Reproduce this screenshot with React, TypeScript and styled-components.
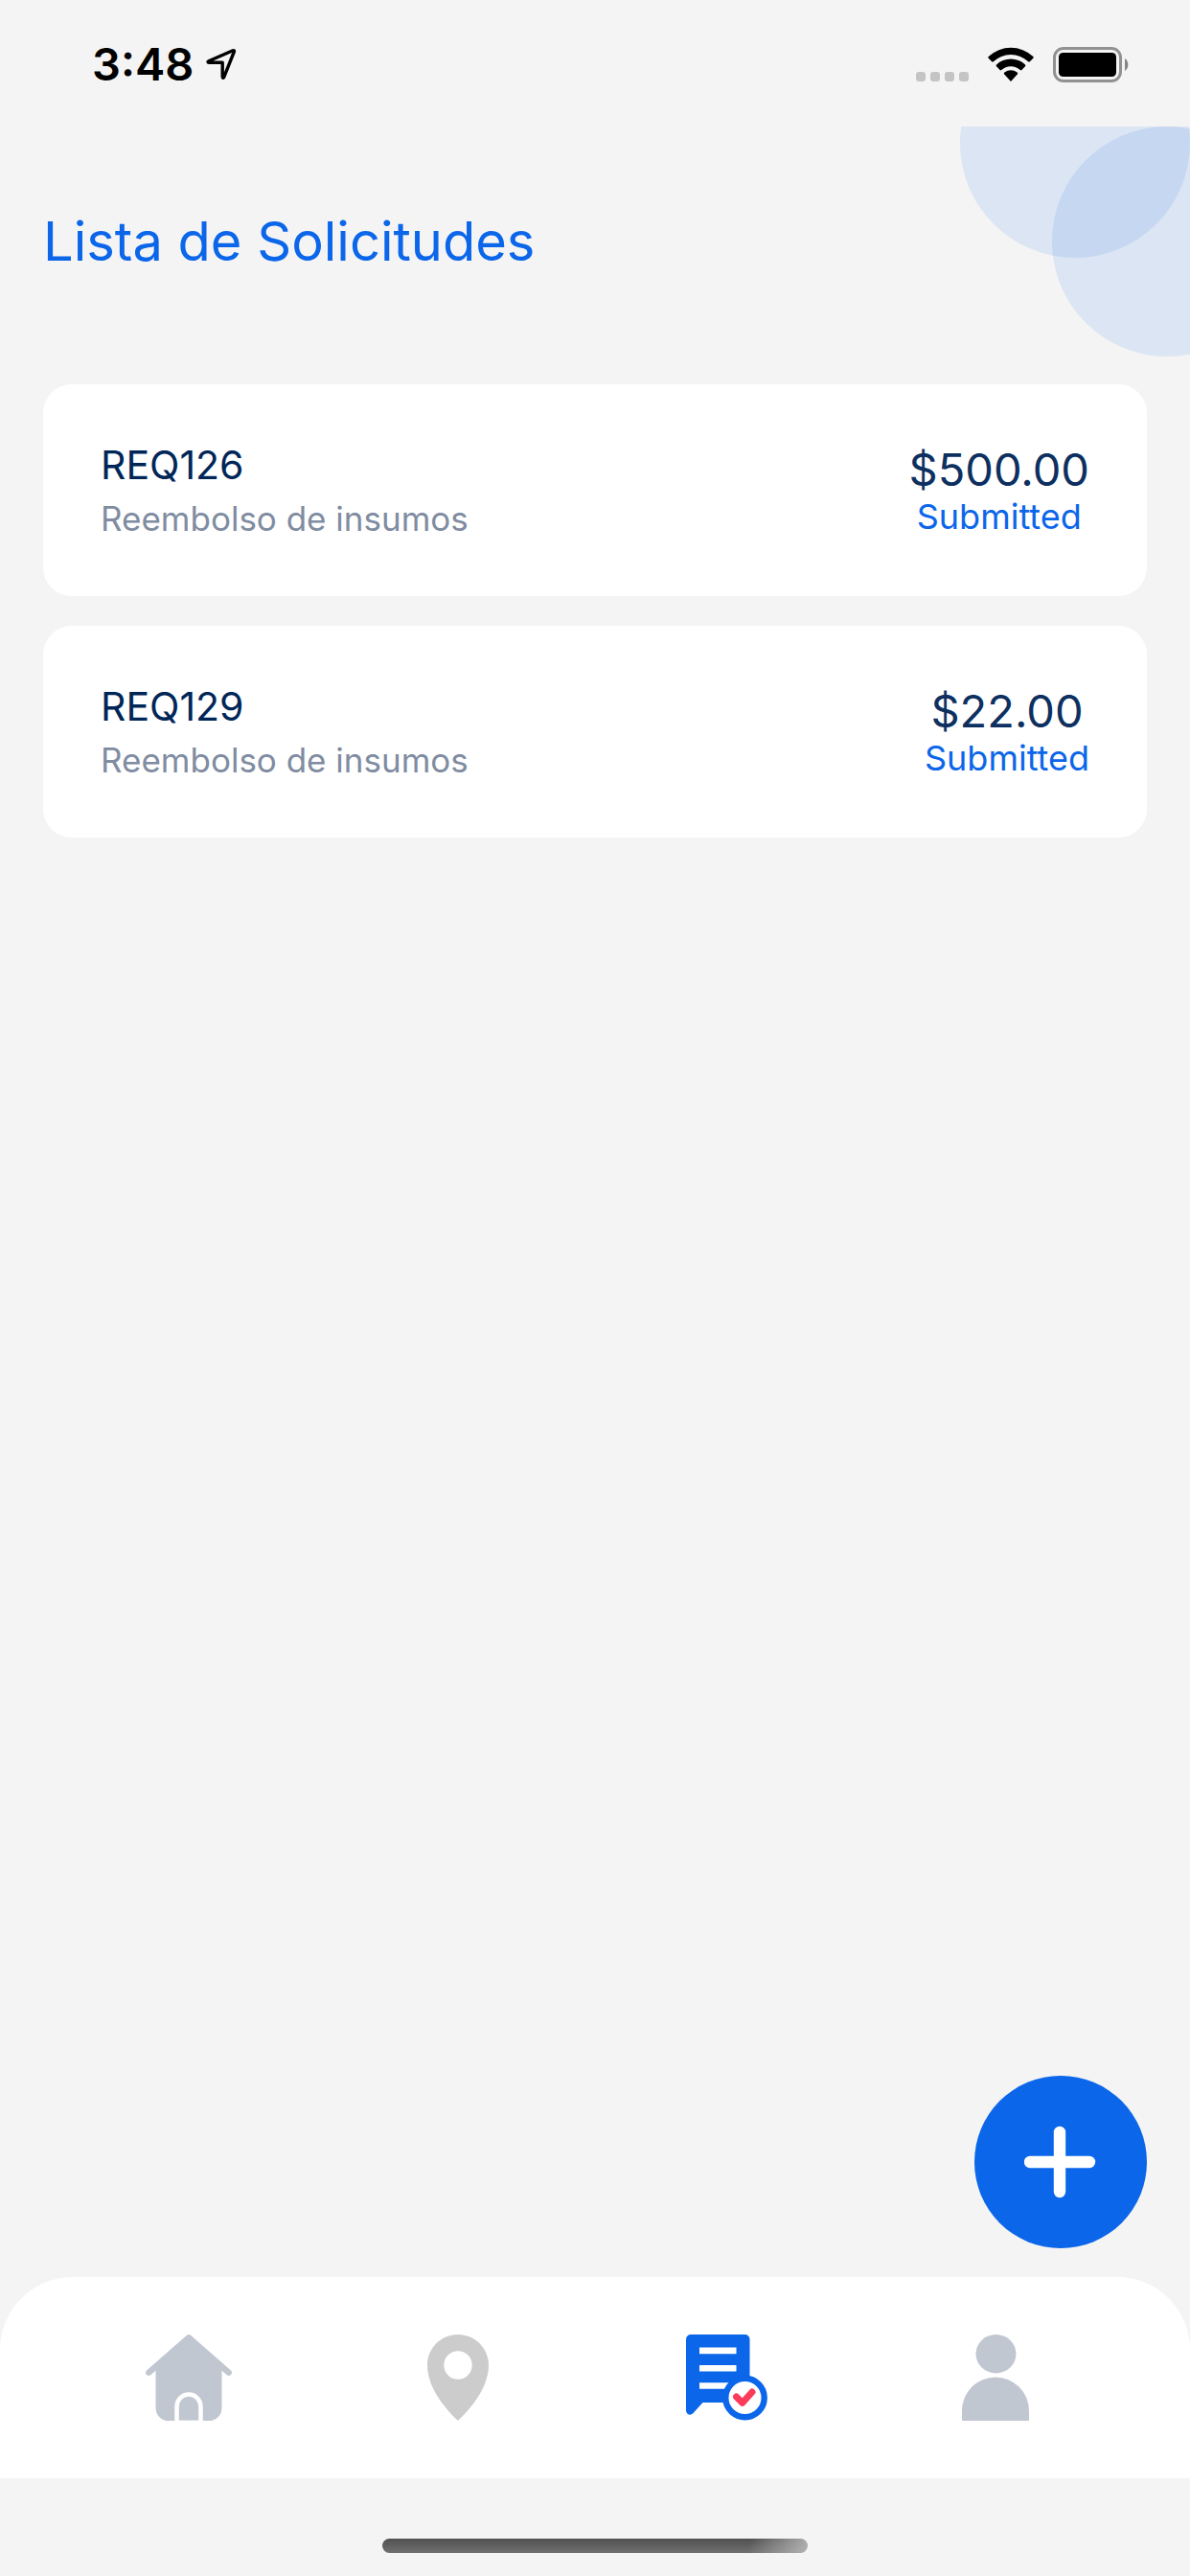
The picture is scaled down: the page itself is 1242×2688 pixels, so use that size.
import React from 'react';
import styled, { createGlobalStyle } from 'styled-components';

const color = {
  page: '#f4f4f4',
  surface: '#ffffff',
  blue: '#0b66ea',
  navy: '#002657',
  amount: '#0d3060',
  muted: '#7f8ca1',
  icon: '#c1c7d1',
  pin: '#cccccc',
  red: '#fb3b5a',
};

const GlobalStyle = createGlobalStyle`
  *, *::before, *::after { box-sizing: border-box; }
  body {
    margin: 0;
    background: ${color.page};
    font-family: Inter, "Liberation Sans", sans-serif;
  }
`;

const Screen = styled.div`
  min-height: 100vh;
  display: flex;
  flex-direction: column;
  background: ${color.page};
`;

const StatusBar = styled.div`
  height: 132px;
  padding: 2px 64px 0 96px;
  display: flex;
  align-items: center;
  justify-content: space-between;
`;

const StatusGroup = styled.div<{ $gap: number }>`
  display: flex;
  align-items: center;
  gap: ${(p) => p.$gap}px;
`;

const Clock = styled.time`
  font-size: 47px;
  font-weight: 600;
  line-height: 56px;
  color: #000;
`;

const Header = styled.header`
  position: relative;
  overflow: hidden;
  height: 240px;
  padding: 84px 45px 0;
`;

const Title = styled.h1`
  margin: 0;
  font-size: 56px;
  font-weight: 400;
  line-height: 72px;
  color: ${color.blue};
`;

const Bubbles = styled.svg`
  position: absolute;
  top: 0;
  right: 0;
`;

const Main = styled.main`
  flex: 1;
  display: flex;
  flex-direction: column;
  justify-content: space-between;
  padding: 29px 45px 30px;
`;

const RequestList = styled.ul`
  margin: 0;
  padding: 0;
  list-style: none;
  display: flex;
  flex-direction: column;
  gap: 31px;
`;

const Card = styled.li`
  display: flex;
  align-items: center;
  justify-content: space-between;
  padding: 59px 60px 60px;
  border-radius: 30px;
  background: ${color.surface};
`;

const Details = styled.div`
  display: flex;
  flex-direction: column;
  gap: 10px;
`;

const Code = styled.div`
  font-size: 41px;
  line-height: 50px;
  color: ${color.navy};
`;

const Description = styled.div`
  font-size: 35px;
  line-height: 42px;
  color: ${color.muted};
`;

const Summary = styled.div`
  display: flex;
  flex-direction: column;
  align-items: center;
`;

const Amount = styled.div`
  font-size: 47px;
  line-height: 56px;
  color: ${color.amount};
`;

const Status = styled.div`
  font-size: 36px;
  line-height: 42px;
  color: ${color.blue};
`;

const AddButton = styled.button`
  align-self: flex-end;
  display: grid;
  place-items: center;
  width: 180px;
  height: 180px;
  padding: 0;
  border: 0;
  border-radius: 50%;
  background: ${color.blue};
  cursor: pointer;
`;

const TabBar = styled.nav`
  display: flex;
  padding: 60px 63px 60px 57px;
  border-radius: 76px 76px 0 0;
  background: ${color.surface};
`;

const Tab = styled.a`
  flex: 1;
  display: flex;
  justify-content: center;
`;

const HomeArea = styled.div`
  display: flex;
  justify-content: center;
  padding: 63px 0 24px;
`;

const HomeIndicator = styled.div`
  width: 444px;
  height: 15px;
  border-radius: 8px;
  background:
    linear-gradient(100deg, rgba(190, 190, 190, 0) 86%, rgba(190, 190, 190, 0.85) 100%),
    linear-gradient(#505050, #707070);
`;

const LocationArrow = () => (
  <svg width="32" height="34" viewBox="0 0 32 34" fill="none" aria-hidden="true">
    <path
      d="M28 2.800 2.800 13.800c-1.200.5-1 1.500.3 1.500H17.200V30c0 1.500 1 1.700 1.600.4L29.300 4c.4-1.100-.2-1.700-1.300-1.200Z"
      stroke="#000"
      strokeWidth="3.400"
      strokeLinejoin="round"
    />
  </svg>
);

const SignalDots = () => (
  <svg width="55" height="36" viewBox="0 0 55 36" fill="#c4c4c4" aria-hidden="true">
    {[0, 15, 30, 45].map((x) => (
      <rect key={x} x={x} y="26" width="10" height="10" rx="3" />
    ))}
  </svg>
);

const Wifi = () => (
  <svg width="48" height="36" viewBox="0 0 48 36" aria-hidden="true">
    <path d="M24 36 17.200 28.600a1.500 1.500 0 0 1 .2-2.200 11 11 0 0 1 13.200 0 1.500 1.500 0 0 1 .2 2.200Z" />
    <path d="M12.600 24 9 20.200c-.5-.6-.5-1.200 0-1.700a22 22 0 0 1 30 0c.5.5.5 1.100 0 1.700L35.400 24c-.5.5-1.100.5-1.600 0a14.500 14.500 0 0 0-19.600 0c-.5.5-1.100.5-1.600 0Z" />
    <path d="M4.200 15.300.7 11.700c-.6-.6-.6-1.200 0-1.700a34 34 0 0 1 46.600 0c.6.5.6 1.100 0 1.700l-3.500 3.600c-.5.5-1 .5-1.600 0a26.500 26.500 0 0 0-36.400 0c-.6.5-1.100.5-1.600 0Z" />
  </svg>
);

const Battery = () => (
  <svg width="79" height="37" viewBox="0 0 79 37" aria-hidden="true">
    <rect x="1.500" y="1.500" width="69" height="34" rx="9.500" fill="none" stroke="#919191" strokeWidth="3" />
    <rect x="6" y="6" width="60" height="25" rx="4.500" />
    <path d="M75 12a8 8 0 0 1 0 13Z" fill="#858585" />
  </svg>
);

const HomeIcon = () => (
  <svg width="90" height="90" viewBox="0 0 90 90" aria-hidden="true">
    <path
      fill={color.icon}
      d="M43 .8Q45-.8 47 .8L89 37.500Q91 40 89 42Q87 44 84.500 42L79.500 37.800V77Q79 87 69 90H21Q11 87 10.500 77V37.800L5.500 42Q3 44 1 42Q-1 40 1 37.500Z"
    />
    <path
      d="M32.500 91V75.500a12.500 13 0 0 1 25 0V91"
      fill="none"
      stroke="#fff"
      strokeWidth="4.500"
    />
    <path d="M34 89h22v2H34Z" fill="#fff" opacity="0.400" />
  </svg>
);

const PinIcon = () => (
  <svg width="64" height="90" viewBox="0 0 64 90" aria-hidden="true">
    <path
      fill={color.pin}
      fillRule="evenodd"
      d="M32 0C14.300 0 0 14.300 0 32c0 20 14 41 32 58 18-17 32-38 32-58C64 14.300 49.700 0 32 0Zm0 17.300a14.700 14.700 0 1 1 0 29.400 14.700 14.700 0 0 1 0-29.400Z"
    />
  </svg>
);

const RequestsIcon = () => (
  <svg width="85" height="90" viewBox="0 0 85 90" aria-hidden="true">
    <path
      fill={color.blue}
      d="M5 0H61.500a5 5 0 0 1 5 5V71H17.500L7.300 82.300Q4.500 84.800 1.500 82.700Q0 81.500 0 79V5A5 5 0 0 1 5 0Z"
    />
    <path d="M14 13.600h38.500v6.600H14ZM14 31.900h38.500v6.600H14ZM14 50.200h38.500v6.600H14Z" fill="#fff" />
    <circle cx="61.500" cy="66" r="20.200" fill="#fff" stroke={color.blue} strokeWidth="6.400" />
    <path
      d="m52.500 65 6.300 6.300L69 60"
      fill="none"
      stroke={color.red}
      strokeWidth="7"
      strokeLinecap="round"
      strokeLinejoin="round"
    />
  </svg>
);

const ProfileIcon = () => (
  <svg width="70" height="90" viewBox="0 0 70 90" fill={color.icon} aria-hidden="true">
    <ellipse cx="35.500" cy="20.200" rx="21" ry="20.200" />
    <path d="M0 89V79.500a35 35 0 0 1 70 0V89q0 1-1 1H1q-1 0-1-1Z" />
  </svg>
);

const PlusIcon = () => (
  <svg width="76" height="76" viewBox="0 0 76 76" aria-hidden="true">
    <path d="M37 7v62M6 38h62" fill="none" stroke="#fff" strokeWidth="12.400" strokeLinecap="round" />
  </svg>
);

const requests = [
  { code: 'REQ126', description: 'Reembolso de insumos', amount: '$500.00', status: 'Submitted' },
  { code: 'REQ129', description: 'Reembolso de insumos', amount: '$22.00', status: 'Submitted' },
];

const tabs = [
  { id: 'inicio', label: 'Inicio', Icon: HomeIcon },
  { id: 'mapa', label: 'Mapa', Icon: PinIcon },
  { id: 'solicitudes', label: 'Solicitudes', Icon: RequestsIcon },
  { id: 'perfil', label: 'Perfil', Icon: ProfileIcon },
];

export default function App() {
  return (
    <Screen>
      <GlobalStyle />
      <StatusBar>
        <StatusGroup $gap={13}>
          <Clock>3:48</Clock>
          <LocationArrow />
        </StatusGroup>
        <StatusGroup $gap={20}>
          <SignalDots />
          <Wifi />
          <Battery />
        </StatusGroup>
      </StatusBar>
      <Header>
        <Bubbles width="240" height="240" viewBox="0 0 240 240" fill={color.blue} aria-hidden="true">
          <circle cx="120" cy="17" r="120" fillOpacity="0.1" />
          <circle cx="216" cy="120" r="120" fillOpacity="0.1" />
        </Bubbles>
        <Title>Lista de Solicitudes</Title>
      </Header>
      <Main>
        <RequestList>
          {requests.map((r) => (
            <Card key={r.code}>
              <Details>
                <Code>{r.code}</Code>
                <Description>{r.description}</Description>
              </Details>
              <Summary>
                <Amount>{r.amount}</Amount>
                <Status>{r.status}</Status>
              </Summary>
            </Card>
          ))}
        </RequestList>
        <AddButton type="button" aria-label="Agregar solicitud">
          <PlusIcon />
        </AddButton>
      </Main>
      <TabBar>
        {tabs.map(({ id, label, Icon }) => (
          <Tab key={id} href={`#${id}`} aria-label={label}>
            <Icon />
          </Tab>
        ))}
      </TabBar>
      <HomeArea>
        <HomeIndicator />
      </HomeArea>
    </Screen>
  );
}
